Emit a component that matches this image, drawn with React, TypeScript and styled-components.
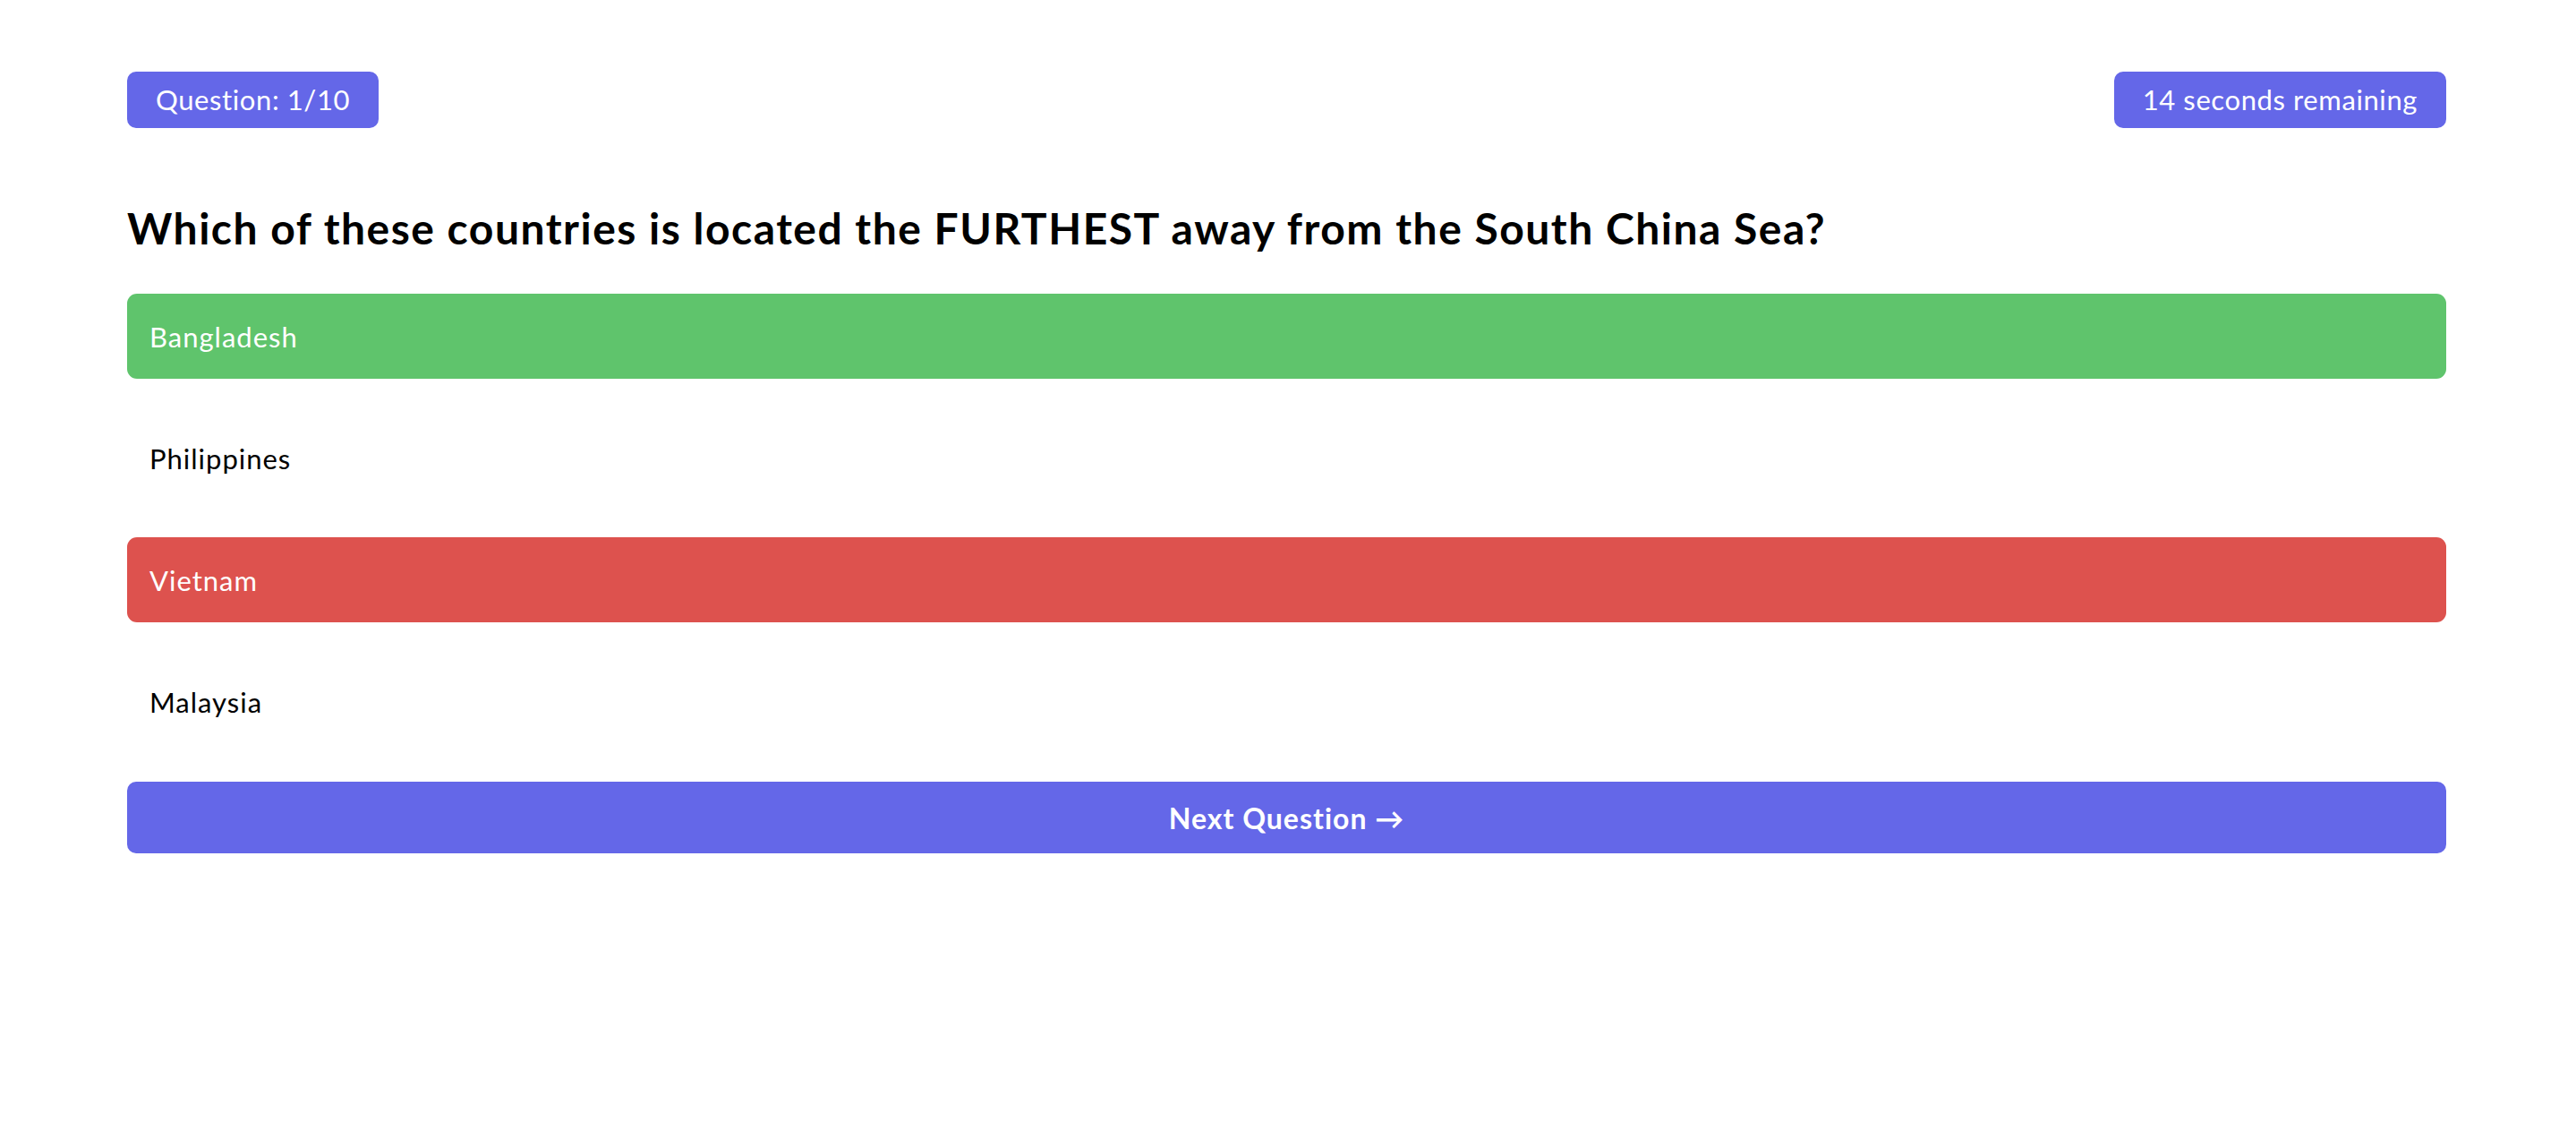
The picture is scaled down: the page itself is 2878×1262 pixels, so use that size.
import React from "react";
import styled, { createGlobalStyle } from "styled-components";

const Global = createGlobalStyle`
  html, body { margin: 0; padding: 0; background: #ffffff; }
  body { font-family: "Lato", "Open Sans", sans-serif; color: #000; }
`;

const Page = styled.main`
  padding: 80px 145px 0 142px;
  display: flex;
  flex-direction: column;
`;

const TopBar = styled.header`
  display: flex;
  justify-content: space-between;
  align-items: center;
`;

const Badge = styled.div`
  background: #6467e8;
  color: #ffffff;
  font-size: 31px;
  line-height: 39px;
  letter-spacing: 0.6px;
  padding: 12px 32px;
  border-radius: 10px;
`;

const Question = styled.h1`
  margin: 83px 0 0;
  font-size: 48px;
  line-height: 58px;
  font-weight: 700;
  letter-spacing: 1.5px;
`;

const Options = styled.div`
  margin-top: 44px;
  display: flex;
  flex-direction: column;
  gap: 41px;
`;

type Status = "correct" | "wrong" | "none";

const Option = styled.div<{ $status: Status }>`
  height: 95px;
  display: flex;
  align-items: center;
  padding: 0 25px;
  border-radius: 11px;
  font-size: 31px;
  letter-spacing: 1px;
  background: ${(p) =>
    p.$status === "correct" ? "#5fc46c" : p.$status === "wrong" ? "#dd524e" : "transparent"};
  color: ${(p) => (p.$status === "none" ? "#000000" : "#ffffff")};
`;

const NextButton = styled.button`
  margin-top: 42px;
  height: 80px;
  border: none;
  border-radius: 10px;
  background: #6467e8;
  color: #ffffff;
  font-family: inherit;
  font-size: 32px;
  font-weight: 700;
  letter-spacing: 1px;
  cursor: pointer;
`;

const options: { label: string; status: Status }[] = [
  { label: "Bangladesh", status: "correct" },
  { label: "Philippines", status: "none" },
  { label: "Vietnam", status: "wrong" },
  { label: "Malaysia", status: "none" },
];

export default function App() {
  return (
    <>
      <Global />
      <Page>
        <TopBar>
          <Badge>Question: 1/10</Badge>
          <Badge>14 seconds remaining</Badge>
        </TopBar>
        <Question>
          Which of these countries is located the FURTHEST away from the South China Sea?
        </Question>
        <Options>
          {options.map((o) => (
            <Option key={o.label} $status={o.status}>
              {o.label}
            </Option>
          ))}
        </Options>
        <NextButton>Next Question →</NextButton>
      </Page>
    </>
  );
}
